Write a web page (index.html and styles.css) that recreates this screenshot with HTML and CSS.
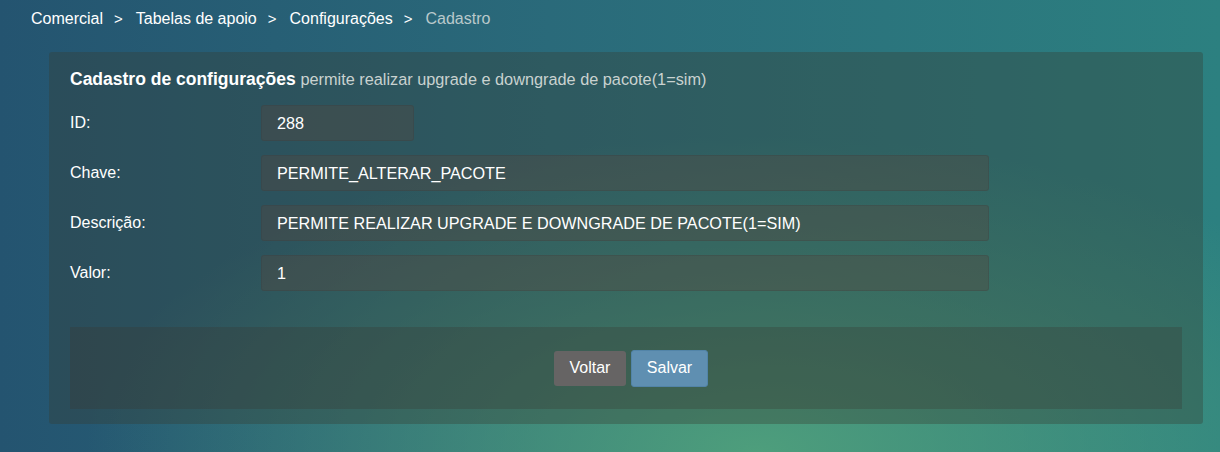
FILE: index.html
```html
<!DOCTYPE html>
<html lang="pt-BR">
  <head>
    <meta charset="UTF-8" />
    <meta name="viewport" content="width=device-width, initial-scale=1.0" />
    <title>Cadastro de configurações</title>
    <link rel="stylesheet" href="styles.css">
  </head>
  <body>
    <nav class="breadcrumb">
      <a href="#">Comercial</a>
      <span class="sep">&gt;</span>
      <a href="#">Tabelas de apoio</a>
      <span class="sep">&gt;</span>
      <a href="#">Configurações</a>
      <span class="sep">&gt;</span>
      <span class="current">Cadastro</span>
    </nav>

    <form class="panel" action="">
      <h1 class="panel-title">Cadastro de configurações <small>permite realizar upgrade e downgrade de pacote(1=sim)</small></h1>

      <div class="field">
        <label for="id">ID:</label>
        <input type="text" id="id" class="input input-short" value="288" readonly>
      </div>

      <div class="field">
        <label for="chave">Chave:</label>
        <input type="text" id="chave" class="input" value="PERMITE_ALTERAR_PACOTE">
      </div>

      <div class="field">
        <label for="descricao">Descrição:</label>
        <input type="text" id="descricao" class="input" value="PERMITE REALIZAR UPGRADE E DOWNGRADE DE PACOTE(1=SIM)">
      </div>

      <div class="field">
        <label for="valor">Valor:</label>
        <input type="text" id="valor" class="input" value="1">
      </div>

      <div class="actions">
        <button type="button" class="btn btn-back">Voltar</button>
        <button type="submit" class="btn btn-save">Salvar</button>
      </div>
    </form>
  </body>
</html>
```

FILE: styles.css
```css
* {
  margin: 0;
  padding: 0;
  box-sizing: border-box;
}

body {
  font-family: 'Liberation Sans', Arial, sans-serif;
  font-size: 16px;
  color: #fff;
  height: 452px;
  overflow: hidden;
  background:
    radial-gradient(ellipse 55% 70% at 62% 100%, rgba(84, 166, 124, 0.85), rgba(84, 166, 124, 0) 100%),
    linear-gradient(to right, #245470 0%, #2a6a7a 45%, #2c8080 100%);
}

/* breadcrumb on top */
.breadcrumb {
  display: flex;
  align-items: center;
  padding: 9px 31px 0;
  line-height: 20px;
}

.breadcrumb a {
  color: #fff;
  text-decoration: none;
}

.breadcrumb .sep {
  margin: 0 13px 0 11px;
  font-size: 15px;
}

.breadcrumb .current {
  color: #b9c9cb;
}

/* main panel */
.panel {
  margin: 23px 17px 0 49px;
  padding: 17px 21px 15px;
  background: rgba(55, 60, 50, 0.35);
  border-radius: 3px;
}

.panel-title {
  font-size: 17.5px;
  font-weight: bold;
  line-height: 20px;
  margin-bottom: 16px;
}

.panel-title small {
  font-size: 16.3px;
  font-weight: normal;
  color: #c9d2d0;
}

.field {
  display: flex;
  align-items: center;
  margin-bottom: 14px;
}

.field label {
  width: 191px;
  flex-shrink: 0;
}

.input {
  all: unset;
  width: 728px;
  height: 36px;
  padding: 0 15px;
  box-sizing: border-box;
  background: rgba(85, 72, 62, 0.38);
  border: 1px solid rgba(50, 50, 45, 0.15);
  border-radius: 3px;
  color: #fff;
  font-size: 16.2px;
}

.input-short {
  width: 153px;
}

/* footer with buttons */
.actions {
  display: flex;
  justify-content: center;
  align-items: center;
  gap: 5px;
  margin-top: 36px;
  padding-left: 10px;
  height: 82px;
  background: rgba(55, 55, 50, 0.3);
}

.btn {
  font-family: inherit;
  font-size: 16px;
  color: #fff;
  height: 35px;
  border: none;
  border-radius: 3px;
  cursor: pointer;
}

.btn-back {
  width: 72px;
  background: #666464;
}

.btn-save {
  width: 77px;
  height: 37px;
  background: #5f8fb1;
  border: 1px solid #5284a8;
}
```
